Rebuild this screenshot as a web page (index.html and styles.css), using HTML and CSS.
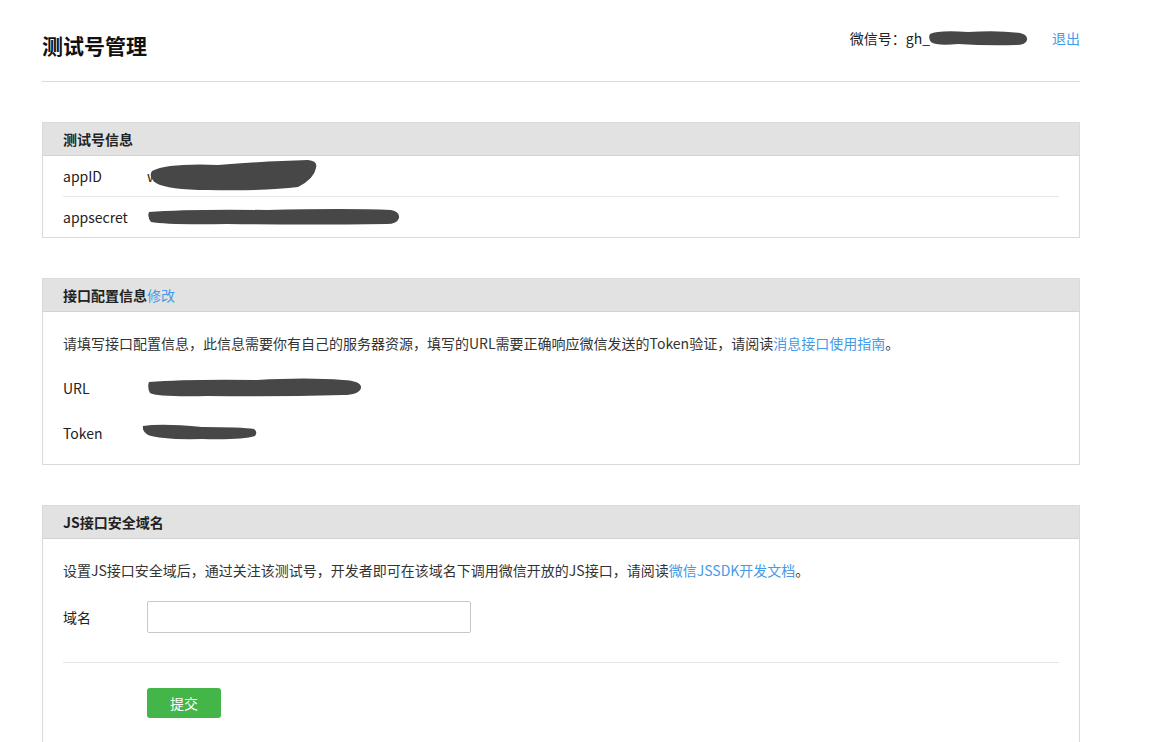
FILE: index.html
```html
<!DOCTYPE html>
<html lang="zh-CN">
<head>
<meta charset="utf-8">
<title>测试号管理</title>
<link rel="stylesheet" href="styles.css">
</head>
<body>
<div class="page">
  <div class="topbar">
    <h1 class="title">测试号管理</h1>
    <div class="account">
      <span class="acc-label">微信号：</span><span class="acc-id">gh_<svg class="blob blob-gh" width="100" height="18" viewBox="0 0 100 18"><path d="M2 5 Q10 1 40 3 Q70 1 92 4 Q100 6 99 11 Q98 16 88 16 Q60 17 30 15 Q8 17 3 13 Q0 9 2 5 Z" fill="#474747"/></svg></span>
      <a class="logout" href="#">退出</a>
    </div>
  </div>

  <section class="panel">
    <div class="panel-hd">测试号信息</div>
    <div class="panel-bd list">
      <div class="row">
        <span class="label">appID</span>
        <span class="value">w<svg class="blob blob-appid" width="170" height="34" viewBox="0 0 170 34"><path d="M4 12 Q20 4 70 6 Q120 2 160 1 Q170 2 168 9 Q166 20 150 28 Q120 32 60 31 Q20 31 8 24 Q0 18 4 12 Z" fill="#474747"/></svg></span>
      </div>
      <div class="row">
        <span class="label">appsecret</span>
        <span class="value"><svg class="blob blob-secret" width="254" height="20" viewBox="0 0 254 20"><path d="M2 5 Q40 2 120 3 Q200 1 244 3 Q253 5 252 11 Q250 17 240 17 Q160 18 80 17 Q20 18 4 15 Q0 10 2 5 Z" fill="#474747"/></svg></span>
      </div>
    </div>
  </section>

  <section class="panel">
    <div class="panel-hd">接口配置信息<a class="link" href="#">修改</a></div>
    <div class="panel-bd">
      <p class="desc">请填写接口配置信息，此信息需要你有自己的服务器资源，填写的URL需要正确响应微信发送的Token验证，请阅读<a class="link" href="#">消息接口使用指南</a>。</p>
      <div class="frow">
        <span class="label">URL</span>
        <span class="value"><svg class="blob" width="216" height="22" viewBox="0 0 216 22"><path d="M2 5 Q40 2 110 3 Q160 0 196 3 Q215 4 214 11 Q212 18 196 18 Q130 20 60 19 Q10 20 3 16 Q0 10 2 5 Z" fill="#474747"/></svg></span>
      </div>
      <div class="frow">
        <span class="label">Token</span>
        <span class="value value-token"><svg class="blob" width="116" height="19" viewBox="0 0 116 19"><path d="M1 3 Q20 0 60 4 Q100 4 112 6 Q116 9 113 13 Q100 17 60 16 Q20 17 6 12 Q0 8 1 3 Z" fill="#474747"/></svg></span>
      </div>
    </div>
  </section>

  <section class="panel panel-last">
    <div class="panel-hd">JS接口安全域名</div>
    <div class="panel-bd">
      <p class="desc">设置JS接口安全域后，通过关注该测试号，开发者即可在该域名下调用微信开放的JS接口，请阅读<a class="link" href="#">微信JSSDK开发文档</a>。</p>
      <div class="frow frow-input">
        <span class="label">域名</span>
        <input class="input" type="text">
      </div>
      <div class="divider"></div>
      <div class="actions">
        <button class="btn" type="button">提交</button>
      </div>
    </div>
  </section>
</div>
</body>
</html>
```

FILE: styles.css
```css
html, body {
  margin: 0;
  padding: 0;
  background: #fff;
}
body {
  font-family: "Noto Sans CJK SC", "Noto Sans", sans-serif;
  font-size: 14px;
  color: #222;
}
.page {
  width: 1038px;
  margin-left: 42px;
}
.topbar {
  display: flex;
  justify-content: space-between;
  align-items: flex-start;
  height: 81px;
  border-bottom: 1px solid #d9d9d9;
  margin-bottom: 40px;
}
.title {
  margin: 31px 0 0 0;
  font-size: 21px;
  line-height: 28px;
  font-weight: bold;
  color: #111;
}
.account {
  display: flex;
  align-items: center;
  margin-top: 28px;
  font-size: 14px;
  line-height: 20px;
  color: #222;
}
.acc-id {
  display: inline-flex;
  align-items: center;
}
.blob {
  display: block;
}
.blob-gh {
  margin-left: -2px;
}
.logout {
  margin-left: 24px;
  color: #459ae9;
  text-decoration: none;
}
.link {
  color: #459ae9;
  text-decoration: none;
  font-weight: normal;
}
.panel {
  border: 1px solid #dadada;
  margin-bottom: 40px;
}
.panel-hd {
  height: 32px;
  line-height: 32px;
  padding-left: 20px;
  background: #e2e2e2;
  border-bottom: 1px solid #d3d3d3;
  font-size: 14px;
  font-weight: bold;
  color: #222;
}
.panel-bd {
  padding: 0 20px;
}
.list .row {
  display: flex;
  align-items: center;
  height: 40px;
  border-top: 1px solid #e8e8e8;
}
.list .row:first-child {
  border-top: 0;
}
.label {
  width: 84px;
  flex: none;
}
.value {
  display: inline-flex;
  align-items: center;
}
.blob-appid {
  margin-left: -10px;
}
.value-token {
  margin-left: -5px;
}
.desc {
  margin: 0;
  padding-top: 20px;
  line-height: 22px;
  font-size: 14px;
  color: #333;
}
.frow {
  display: flex;
  align-items: center;
  height: 45px;
}
.panel-bd > .desc + .frow {
  margin-top: 11px;
}
.panel-bd > .frow:last-child {
  margin-bottom: 9px;
}
.frow-input {
  height: 31px;
}
.panel-bd > .desc + .frow-input {
  margin-top: 20px;
}
.input {
  width: 324px;
  height: 32px;
  box-sizing: border-box;
  border: 1px solid #c8c8c8;
  border-radius: 2px;
  padding: 0 8px;
  font-size: 14px;
  outline: none;
}
.divider {
  height: 1px;
  background: #e4e4e4;
  margin-top: 30px;
}
.actions {
  padding: 25px 0 30px 84px;
}
.btn {
  width: 74px;
  height: 30px;
  border: 0;
  border-radius: 3px;
  background: #44b549;
  color: #fff;
  font-family: "Noto Sans CJK SC", sans-serif;
  font-size: 14px;
  cursor: pointer;
}
```
